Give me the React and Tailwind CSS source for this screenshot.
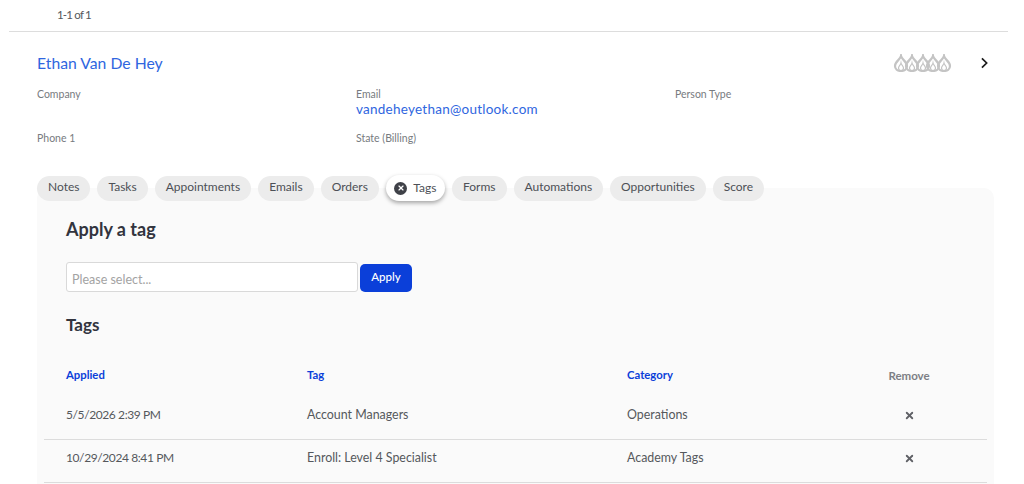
import { X } from 'lucide-react';

const TABS = ['Notes', 'Tasks', 'Appointments', 'Emails', 'Orders', 'Tags', 'Forms', 'Automations', 'Opportunities', 'Score'];

const ROWS = [
  { applied: '5/5/2026 2:39 PM', tag: 'Account Managers', category: 'Operations' },
  { applied: '10/29/2024 8:41 PM', tag: 'Enroll: Level 4 Specialist', category: 'Academy Tags' },
];

const GRID = 'grid grid-cols-[241px_320px_204px_156px]';

function Flame() {
  return (
    <svg viewBox="0 0 16 18" className="w-[16px] h-[18px] -ml-[5.25px] first:ml-0" fill="none" stroke="#c4c4c4" strokeWidth="2.2" strokeLinejoin="miter" strokeMiterlimit="8">
      <path d="M8 2C8.6 5.5 14 7.5 14 12C14 15 11.5 17 8 17C4.5 17 2 15 2 12C2 7.5 7.4 5.5 8 2Z" />
      <path d="M8 9C8.4 11 10.5 12 10.5 14C10.5 15.5 9.3 16.5 8 16.5C6.7 16.5 5.5 15.5 5.5 14C5.5 12 7.6 11 8 9Z" strokeWidth="1.2" />
    </svg>
  );
}

function Field({ label, children }) {
  return (
    <div className="h-[44px]">
      <div className="text-[10.5px] leading-[14px] text-[#777b80]">{label}</div>
      {children}
    </div>
  );
}

function Tab({ label }) {
  if (label === 'Tags') {
    return (
      <div className="h-[26px] px-[8.5px] flex items-center gap-[6px] rounded-full bg-white shadow-[0_2px_4px_rgba(0,0,0,0.35)] text-[12px] text-[#4d5056]">
        <span className="w-[13px] h-[13px] rounded-full bg-[#3f4148] flex items-center justify-center">
          <X size={8} color="#fff" strokeWidth={3.5} />
        </span>
        {label}
      </div>
    );
  }
  return (
    <div className="h-[25px] px-[11px] pb-[2px] flex items-center rounded-full bg-[#ececec] text-[12px] text-[#4d5056]">
      {label}
    </div>
  );
}

export default function App() {
  return (
    <div className="w-[1024px] h-[484px] overflow-hidden bg-white font-['Lato',sans-serif]">
      <div className="ml-[9px] mr-[16px] h-[32px] border-b border-[#dddddd] pl-[48px] pt-[7px] text-[11.5px] leading-[16px] tracking-[-0.8px] text-[#55585c]">
        1-1 of 1
      </div>

      <div className="ml-[37px] mr-[30px]">
        <div className="h-[50px] pt-[21px] flex justify-between">
          <div className="text-[15.75px] leading-[20px] text-[#2f66e0]">Ethan Van De Hey</div>
          <div className="flex items-center h-[20px]">
            <div className="flex items-center"><Flame /><Flame /><Flame /><Flame /><Flame /></div>
            <svg viewBox="0 0 10 14" className="ml-[28px] mr-[5px] w-[9px] h-[12px]" fill="none" stroke="#1c1c1c" strokeWidth="2">
              <path d="M2 1.5L7.5 7L2 12.5" />
            </svg>
          </div>
        </div>

        <div className="grid grid-cols-[319px_319px_1fr] mt-[5px]">
          <Field label="Company" />
          <Field label="Email">
            <div className="text-[13.5px] leading-[16px] tracking-[0.25px] text-[#2f66e0]">vandeheyethan@outlook.com</div>
          </Field>
          <Field label="Person Type" />
          <Field label="Phone 1" />
          <Field label="State (Billing)" />
        </div>
      </div>

      <div className="relative z-10 ml-[37px] flex items-center gap-[7px] h-[26px]">
        {TABS.map(t => <Tab key={t} label={t} />)}
      </div>

      <div className="mt-[-13px] ml-[37px] mr-[30px] h-[400px] rounded-t-[10px] bg-[#fafafa] px-[7px]">
        <div className="pl-[22px] pt-[30px]">
          <h2 className="text-[18px] leading-[22px] font-bold text-[#32343e]">Apply a tag</h2>
          <div className="mt-[22px] flex items-start gap-[2px]">
            <div className="w-[292px] h-[30px] rounded-[3px] border border-[#d9d9d9] bg-white px-[5px] pt-[7px] flex items-center text-[12.5px] text-[#a3a3a3]">
              Please select...
            </div>
            <button className="mt-[2px] w-[52px] h-[28px] rounded-[5px] bg-[#0b3fd9] pb-[2px] text-white text-[11.5px] font-medium">Apply</button>
          </div>
          <h2 className="mt-[22px] text-[17px] leading-[22px] font-bold text-[#32343e]">Tags</h2>
        </div>

        <div className={`${GRID} mt-[31px] pl-[22px] h-[14px] items-center text-[11.3px] font-bold text-[#0b3fd9]`}>
          <div>Applied</div>
          <div>Tag</div>
          <div>Category</div>
          <div className="text-center text-[11.5px] text-[#7d7f85]">Remove</div>
        </div>

        <div className="mt-[16px]">
          {ROWS.map(row => (
            <div key={row.applied} className={`${GRID} pl-[22px] h-[43px] pt-[10px] items-start border-b border-[#dcdcdc] text-[12.4px] leading-[16px] text-[#55585c]`}>
              <div className="text-[12px] tracking-[-0.4px]">{row.applied}</div>
              <div>{row.tag}</div>
              <div>{row.category}</div>
              <div className="flex justify-center h-[16px] items-center">
                <X size={11} color="#5f6166" strokeWidth={4} />
              </div>
            </div>
          ))}
        </div>
      </div>
    </div>
  );
}
